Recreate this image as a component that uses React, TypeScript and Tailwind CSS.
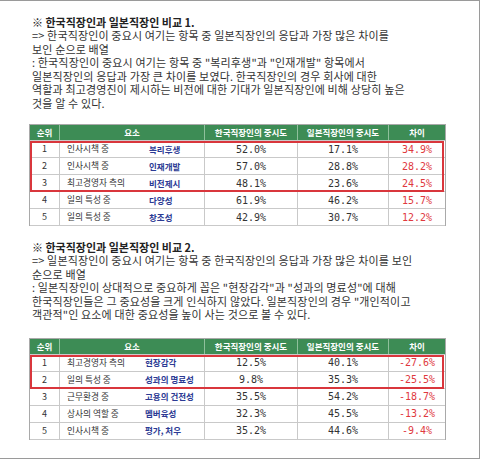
import React from "react";

type Row = {
  rank: string;
  group: string;
  item: string;
  kr: string;
  jp: string;
  diff: string;
};

const firstRows: Row[] = [
  { rank: "1", group: "인사시책 중", item: "복리후생", kr: "52.0%", jp: "17.1%", diff: "34.9%" },
  { rank: "2", group: "인사시책 중", item: "인재개발", kr: "57.0%", jp: "28.8%", diff: "28.2%" },
  { rank: "3", group: "최고경영자 측의", item: "비전제시", kr: "48.1%", jp: "23.6%", diff: "24.5%" },
  { rank: "4", group: "일의 특성 중", item: "다양성", kr: "61.9%", jp: "46.2%", diff: "15.7%" },
  { rank: "5", group: "일의 특성 중", item: "창조성", kr: "42.9%", jp: "30.7%", diff: "12.2%" },
];

const secondRows: Row[] = [
  { rank: "1", group: "최고경영자 측의", item: "현장감각", kr: "12.5%", jp: "40.1%", diff: "-27.6%" },
  { rank: "2", group: "일의 특성 중", item: "성과의 명료성", kr: "9.8%", jp: "35.3%", diff: "-25.5%" },
  { rank: "3", group: "근무환경 중", item: "고용의 건전성", kr: "35.5%", jp: "54.2%", diff: "-18.7%" },
  { rank: "4", group: "상사의 역할 중", item: "멤버육성", kr: "32.3%", jp: "45.5%", diff: "-13.2%" },
  { rank: "5", group: "인사시책 중", item: "평가, 처우", kr: "35.2%", jp: "44.6%", diff: "-9.4%" },
];

const cols = "grid grid-cols-[30px_145px_93px_91px_56px]";
const num = "flex items-center justify-center text-[10px] font-['DejaVu_Sans_Mono',monospace]";

function HeaderRow() {
  return (
    <div className={`${cols} h-[16px] bg-[#3d8c55] text-white text-[8.5px] font-bold border-b border-[#c9c9c9]`}>
      {["순위", "요소", "한국직장인의 중시도", "일본직장인의 중시도", "차이"].map((h, i) => (
        <div
          key={h}
          className={`flex items-center justify-center ${i < 4 ? "border-r border-[#8fc09c]" : ""}`}
        >
          {h}
        </div>
      ))}
    </div>
  );
}

function DataRow({ row, itemCol }: { row: Row; itemCol: string }) {
  return (
    <div className={`${cols} h-[17px] border-b border-[#c9c9c9] text-[#333]`}>
      <div className="flex items-center justify-center border-r border-[#c9c9c9] text-[9px]">{row.rank}</div>
      <div className="flex items-center pl-[7px] border-r border-[#c9c9c9]">
        <span className={`${itemCol} text-[8.7px]`}>{row.group}</span>
        <span className="text-[8.5px] font-bold text-[#2b3a94]">{row.item}</span>
      </div>
      <div className={`${num} border-r border-[#c9c9c9]`}>{row.kr}</div>
      <div className={`${num} border-r border-[#c9c9c9]`}>{row.jp}</div>
      <div className={`${num} text-[#e0393e]`}>{row.diff}</div>
    </div>
  );
}

function CompareTable({ rows, boxed, itemCol }: { rows: Row[]; boxed: number; itemCol: string }) {
  return (
    <div className="ml-[29px] w-[417px] border border-[#a9a9a9] border-b-0">
      <HeaderRow />
      {/* highlighted top rows */}
      <div className="relative">
        {rows.slice(0, boxed).map((r) => (
          <DataRow key={r.rank} row={r} itemCol={itemCol} />
        ))}
        <div className="absolute left-0 right-[1px] top-0 bottom-0 border-2 border-[#d9363c]" />
      </div>
      {rows.slice(boxed).map((r) => (
        <DataRow key={r.rank} row={r} itemCol={itemCol} />
      ))}
    </div>
  );
}

export default function App() {
  return (
    <div className="w-[480px] h-[459px] bg-white border-t border-r border-b border-[#9a9a9a] font-['Noto_Sans_CJK_KR',sans-serif] text-[#333] overflow-hidden">
      {/* 비교 1 */}
      <div className="pl-[32px] pt-[14px]">
        <div className="text-[11px] leading-[14px] font-bold text-[#222]">
          ※ 한국직장인과 일본직장인 비교 1.
        </div>
        <div className="text-[11px] leading-[13.5px] tracking-[0.15px]">
          <div>=&gt; 한국직장인이 중요시 여기는 항목 중 일본직장인의 응답과 가장 많은 차이를</div>
          <div>보인 순으로 배열</div>
          <div>: 한국직장인이 중요시 여기는 항목 중 "복리후생"과 "인재개발" 항목에서</div>
          <div>일본직장인의 응답과 가장 큰 차이를 보였다. 한국직장인의 경우 회사에 대한</div>
          <div>역할과 최고경영진이 제시하는 비전에 대한 기대가 일본직장인에 비해 상당히 높은</div>
          <div>것을 알 수 있다.</div>
        </div>
      </div>
      <div className="mt-[14px]">
        <CompareTable rows={firstRows} boxed={3} itemCol="w-[82px]" />
      </div>

      {/* 비교 2 */}
      <div className="pl-[32px] pt-[14px]">
        <div className="text-[11px] leading-[14px] font-bold text-[#222]">
          ※ 한국직장인과 일본직장인 비교 2.
        </div>
        <div className="text-[11px] leading-[13.5px] tracking-[0.15px]">
          <div>=&gt; 일본직장인이 중요시 여기는 항목 중 한국직장인의 응답과 가장 많은 차이를 보인</div>
          <div>순으로 배열</div>
          <div>: 일본직장인이 상대적으로 중요하게 꼽은 "현장감각"과 "성과의 명료성"에 대해</div>
          <div>한국직장인들은 그 중요성을 크게 인식하지 않았다. 일본직장인의 경우 "개인적이고</div>
          <div>객관적"인 요소에 대한 중요성을 높이 사는 것으로 볼 수 있다.</div>
        </div>
      </div>
      <div className="mt-[16px]">
        <CompareTable rows={secondRows} boxed={2} itemCol="w-[78px]" />
      </div>
    </div>
  );
}
